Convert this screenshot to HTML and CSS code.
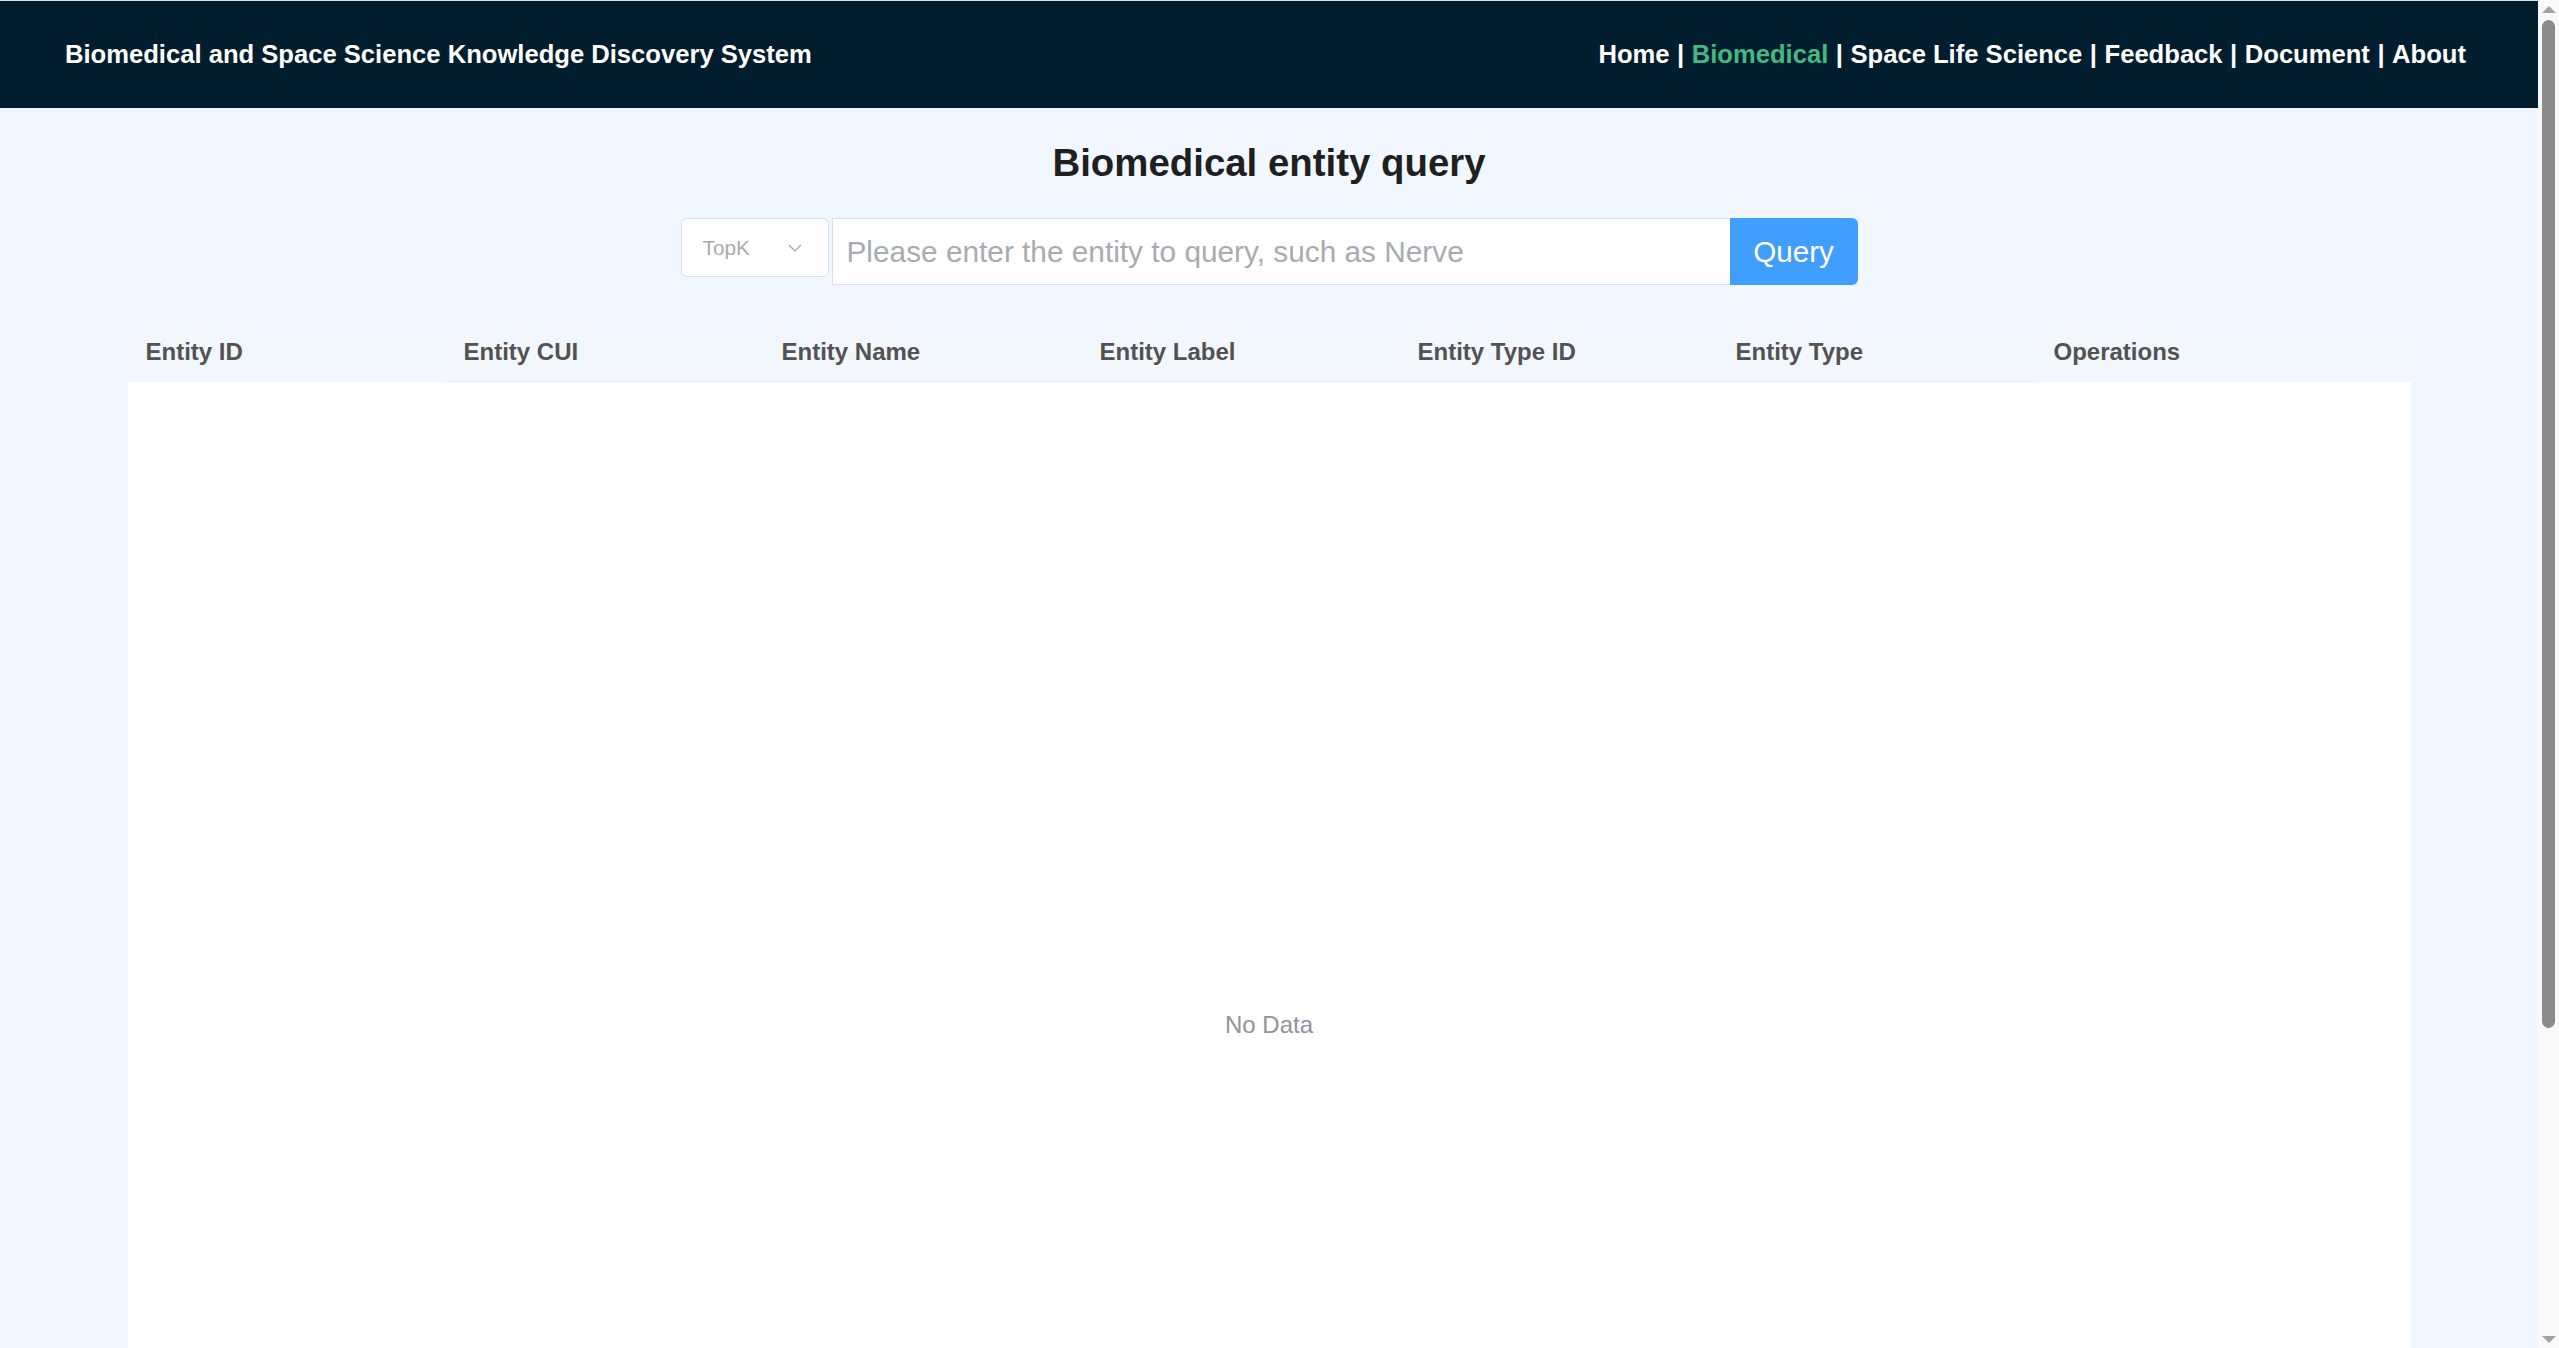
FILE: index.html
```html
<!DOCTYPE html>
<html lang="en">
<head>
<meta charset="utf-8">
<title>Biomedical entity query</title>
<link rel="stylesheet" href="styles.css">
</head>
<body>
<div class="app">
  <header class="topbar">
    <div class="brand">Biomedical and Space Science Knowledge Discovery System</div>
    <nav class="nav">
      <a class="nav-link" href="#">Home</a><span class="sep">|</span><a class="nav-link active" href="#">Biomedical</a><span class="sep">|</span><a class="nav-link" href="#">Space Life Science</a><span class="sep">|</span><a class="nav-link" href="#">Feedback</a><span class="sep">|</span><a class="nav-link" href="#">Document</a><span class="sep">|</span><a class="nav-link" href="#">About</a>
    </nav>
  </header>
  <main class="page">
    <h2 class="page-title">Biomedical entity query</h2>
    <div class="search">
      <div class="select">
        <span class="select-text">TopK</span>
        <svg class="chevron" width="14" height="8" viewBox="0 0 14 8"><path d="M1 1 L7 7 L13 1" fill="none" stroke="#a8abb2" stroke-width="1.4"/></svg>
      </div>
      <input class="query-input" type="text" placeholder="Please enter the entity to query, such as Nerve">
      <button class="query-btn" type="button">Query</button>
    </div>
    <div class="table">
      <div class="thead">
        <div class="th">Entity ID</div>
        <div class="th lined">Entity CUI</div>
        <div class="th lined">Entity Name</div>
        <div class="th lined">Entity Label</div>
        <div class="th lined">Entity Type ID</div>
        <div class="th lined">Entity Type</div>
        <div class="th">Operations</div>
      </div>
      <div class="tbody">
        <span class="empty">No Data</span>
      </div>
    </div>
  </main>
</div>
<div class="scrollbar" aria-hidden="true">
  <div class="sb-button"><span class="arrow-up"></span></div>
  <div class="sb-thumb"></div>
  <div class="sb-spacer"></div>
  <div class="sb-button"><span class="arrow-down"></span></div>
</div>
</body>
</html>
```

FILE: styles.css
```css
html {
  background: #f0f7ff;
}

body {
  margin: 0;
  height: 100vh;
  overflow: hidden;
  display: flex;
  font-family: "Liberation Sans", Arial, sans-serif;
  background: #f0f7ff;
}

.app {
  flex: 1;
  min-width: 0;
  overflow: hidden;
}

.scrollbar {
  width: 21px;
  flex: none;
  background: #f9f9f9;
  display: flex;
  flex-direction: column;
  align-items: center;
}

.sb-button {
  height: 18px;
  width: 100%;
  flex: none;
  display: flex;
  align-items: center;
  justify-content: center;
}

.arrow-up {
  width: 0;
  height: 0;
  border-left: 7px solid transparent;
  border-right: 7px solid transparent;
  border-bottom: 7px solid #a3a3a3;
}

.arrow-down {
  width: 0;
  height: 0;
  border-left: 7px solid transparent;
  border-right: 7px solid transparent;
  border-top: 7px solid #a3a3a3;
}

.sb-thumb {
  margin-top: 2px;
  width: 13px;
  height: 1008px;
  flex: none;
  border-radius: 7px;
  background: #8b8b8b;
}

.sb-spacer {
  flex: 1;
}

.topbar {
  box-sizing: border-box;
  height: 108px;
  border-top: 1px solid #dadada;
  background: #021e2e;
  display: flex;
  align-items: center;
  justify-content: space-between;
  padding: 0 72px 0 65px;
  color: #ffffff;
  font-weight: bold;
  font-size: 25.6px;
}

.brand {
  white-space: nowrap;
}

.nav {
  display: flex;
  align-items: center;
  white-space: nowrap;
}

.nav-link {
  color: #ffffff;
  text-decoration: none;
}

.nav-link.active {
  color: #42b983;
}

.sep {
  margin: 0 7.5px;
  color: #ffffff;
}

.page {
  display: flex;
  flex-direction: column;
  align-items: center;
}

.page-title {
  margin: 32px 0 0;
  height: 46px;
  line-height: 46px;
  font-size: 38.4px;
  font-weight: bold;
  color: #1f1f1f;
}

.search {
  margin-top: 32px;
  display: flex;
  align-items: flex-start;
}

.select {
  box-sizing: border-box;
  width: 148px;
  height: 59px;
  background: #ffffff;
  border: 1px solid #dcdfe6;
  border-radius: 6px;
  display: flex;
  align-items: center;
  justify-content: space-between;
  padding: 0 26px 0 21px;
  margin-right: 3px;
}

.select-text {
  font-size: 20.8px;
  color: #a8abb2;
}

.chevron {
  display: block;
}

.query-input {
  box-sizing: border-box;
  width: 898px;
  height: 67px;
  margin: 0;
  border: 1px solid #dcdfe6;
  border-right: none;
  border-radius: 0;
  background: #ffffff;
  padding: 0 14px;
  font-family: "Liberation Sans", Arial, sans-serif;
  font-size: 29.8px;
  color: #303133;
  outline: none;
}

.query-input::placeholder {
  color: #a8abb2;
}

.query-btn {
  box-sizing: border-box;
  width: 128px;
  height: 67px;
  margin: 0;
  border: none;
  border-radius: 0 6px 6px 0;
  background: #409eff;
  color: #ffffff;
  font-family: "Liberation Sans", Arial, sans-serif;
  font-size: 29.6px;
  padding: 0;
}

.table {
  margin-top: 38px;
  width: 2283px;
}

.thead {
  display: grid;
  grid-template-columns: repeat(6, 318px) 1fr;
  background: #f2f6fd;
}

.th {
  box-sizing: border-box;
  height: 59px;
  display: flex;
  align-items: center;
  padding-left: 18px;
  font-size: 24px;
  font-weight: bold;
  color: #525252;
  border-bottom: 1px solid transparent;
}

.th.lined {
  border-bottom-color: #e6e9ef;
}

.tbody {
  height: 1286px;
  background: #ffffff;
  display: flex;
  align-items: center;
  justify-content: center;
}

.empty {
  font-size: 24px;
  color: #909399;
}
```
